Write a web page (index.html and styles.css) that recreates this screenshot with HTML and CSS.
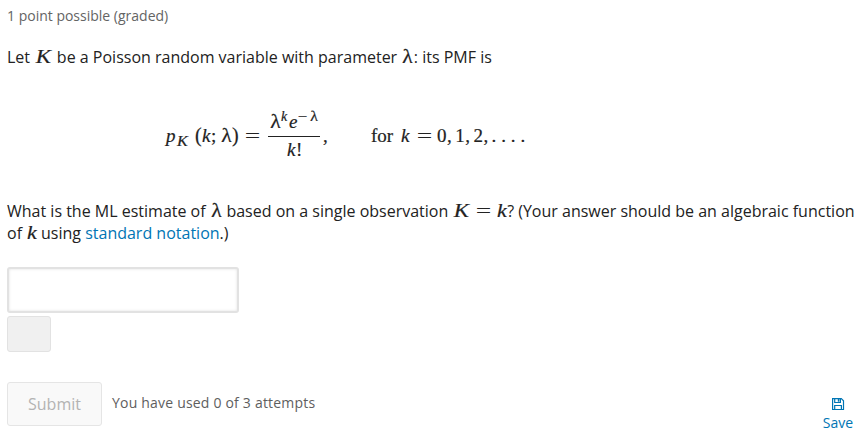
FILE: index.html
```html
<!DOCTYPE html>
<html lang="en">
<head>
<meta charset="utf-8">
<title>Poisson ML estimate</title>
<link rel="stylesheet" href="styles.css">
</head>
<body>
<main class="problem">
  <div class="progress">1 point possible (graded)</div>
  <p class="intro">Let <span class="math cap">K</span> be a Poisson random variable with parameter <span class="math lam">λ</span>: its PMF is</p>
  <div class="equation">
    <span class="math p">p</span><span class="math sub">K</span><span class="paren open">(</span><span class="math k">k</span><span class="semi">;</span><span class="math lambda l">λ</span><span class="paren close">)</span><span class="eq">=</span>
    <span class="fraction">
      <span class="numerator"><span class="math lambda nl">λ</span><span class="math sup supk">k</span><span class="math e">e</span><span class="sup minus">−</span><span class="math lambda sup">λ</span></span>
      <span class="denominator"><span class="math k">k</span>!</span>
    </span>
    <span class="comma after">,</span>
    <span class="for">for</span><span class="math k">k</span><span class="eq second">=</span><span class="num">0</span><span class="comma">,</span><span class="num">1</span><span class="comma">,</span><span class="num">2</span><span class="comma">,</span><span class="dots">....</span>
  </div>
  <p class="question">What is the ML estimate of <span class="math lam">λ</span> based on a single observation <span class="math cap">K</span><span class="eq inline">=</span><span class="math kk">k</span>? (Your answer should be an algebraic function of <span class="math kk">k</span> using <a href="#">standard notation</a>.)</p>
  <input class="answer" type="text" aria-label="Answer">
  <div class="preview"></div>
  <div class="actions">
    <button class="submit" disabled>Submit</button>
    <span class="attempts">You have used 0 of 3 attempts</span>
    <button class="save">
      <svg width="14" height="14" viewBox="0 0 14 14" fill="none" stroke="currentColor" stroke-width="1.2"><path d="M1.6 1.6H10.3L12.5 3.8V12.5H1.6ZM3.7 1.6V5.5H9.4V1.6M3.7 12.5V8.5H10.4V12.5"/><path d="M7.6 2V4.7" stroke-width="1.6"/></svg>
      <span>Save</span>
    </button>
  </div>
</main>
</body>
</html>
```
FILE: styles.css
```css
* { box-sizing: border-box; }
body {
  margin: 0;
  min-height: 438px;
  background: #fff;
  color: #222;
  font: 16px/22px "Open Sans", sans-serif;
}
.problem { padding: 5px 3px 0 7px; min-height: 438px; }
.progress { font-size: 14px; color: #646464; height: 22px; }
p { margin: 0; }
.intro { margin-top: 19px; height: 22px; white-space: nowrap; }
.math {
  font-family: "Liberation Serif", serif;
  font-style: italic;
}
p .math { display: inline-block; font-size: 19px; line-height: 18px; -webkit-text-stroke: 0.2px; }
p .cap { width: 16px; margin-left: 2px; margin-right: 0.5px; transform: scaleX(1.2); transform-origin: 1px 50%; }
p .lam { width: 11px; margin-left: 1px; margin-right: 0.5px; font-style: normal; transform: skewX(-3deg) scale(1.15, 1.05); transform-origin: 0 75%; }
p .kk { width: 10px; margin-left: 0.7px; transform: scaleX(1.15); transform-origin: 0 50%; }
.lambda { font-style: normal; transform: skewX(-3deg) scale(1.15, 1.05); transform-origin: 0 75%; }
.eq {
  font-family: "Liberation Serif", serif;
  display: inline-block;
  width: 15px;
  text-align: center;
  transform: scaleX(1.45);
  -webkit-text-stroke: 0;
}
.inline { font-size: 19px; line-height: 18px; margin: 0 5.5px 0 5px; }
.equation {
  display: flex;
  align-items: baseline;
  height: 48px;
  margin: 56px 0 0 159px;
  font: 19px/22px "Liberation Serif", serif;
  -webkit-text-stroke: 0.2px;
}
.p { width: 11px; }
.sub { width: 18px; font-size: 14px; position: relative; top: 4px; transform: scaleX(1.15); transform-origin: 0 50%; }
.paren { font-size: 20px; }
.open { width: 7px; }
.k { width: 9px; }
.semi { width: 10px; }
.l { width: 11px; }
.close { width: 13px; }
.fraction { width: 52px; margin-left: 8px; position: relative; top: -14px; }
.numerator, .denominator { display: block; height: 24px; white-space: nowrap; }
.numerator { padding-left: 2px; height: 25px; }
.numerator span { display: inline-block; }
.denominator { border-top: 1px solid #222; padding: 2px 0 0 19px; }
.denominator .k { display: inline-block; }
.nl { width: 11px; }
.sup { font-size: 14px; line-height: 14px; position: relative; top: -7px; }
.supk { width: 8px; }
.e { width: 10px; }
.minus { width: 11px; transform: scaleX(1.2); }
.after { width: 51px; padding-left: 3px; }
.for { width: 30px; }
.second { margin: 0 5px 0 7px; }
.num { width: 9px; }
.comma:not(.after) { width: 9.2px; padding-left: 1px; }
.dots { letter-spacing: 4.9px; }
.question { margin-top: 28px; height: 44px; }
a { color: #0075b4; text-decoration: none; }
.answer {
  display: block;
  width: 232px;
  height: 46px;
  margin-top: 23px;
  padding: 10px;
  border: 2px solid #e2e2e2;
  border-radius: 3px;
  box-shadow: inset 0 0 3px rgba(0, 0, 0, 0.12);
  font: 16px "Open Sans", sans-serif;
}
.preview {
  width: 44px;
  height: 36px;
  margin-top: 3px;
  background: #f0f0f0;
  border: 1px solid #e2e2e2;
  border-radius: 3px;
}
.actions { display: flex; margin-top: 30px; height: 44px; }
button { font-family: inherit; cursor: pointer; }
.submit {
  width: 95px;
  height: 44px;
  background: #f9f9f9;
  border: 1px solid #e5e5e5;
  border-radius: 3px;
  color: #b3b3b3;
  font-size: 16px;
}
.attempts { margin: 10px auto 0 10px; font-size: 14px; letter-spacing: 0.2px; color: #5e5e5e; }
.save {
  display: flex;
  flex-direction: column;
  align-items: center;
  width: 44px;
  height: 38px;
  margin-top: 15px;
  padding: 0;
  border: 0;
  background: none;
  color: #0075b4;
  font-size: 14px;
  line-height: 23px;
}
.save svg { flex: none; }
```
